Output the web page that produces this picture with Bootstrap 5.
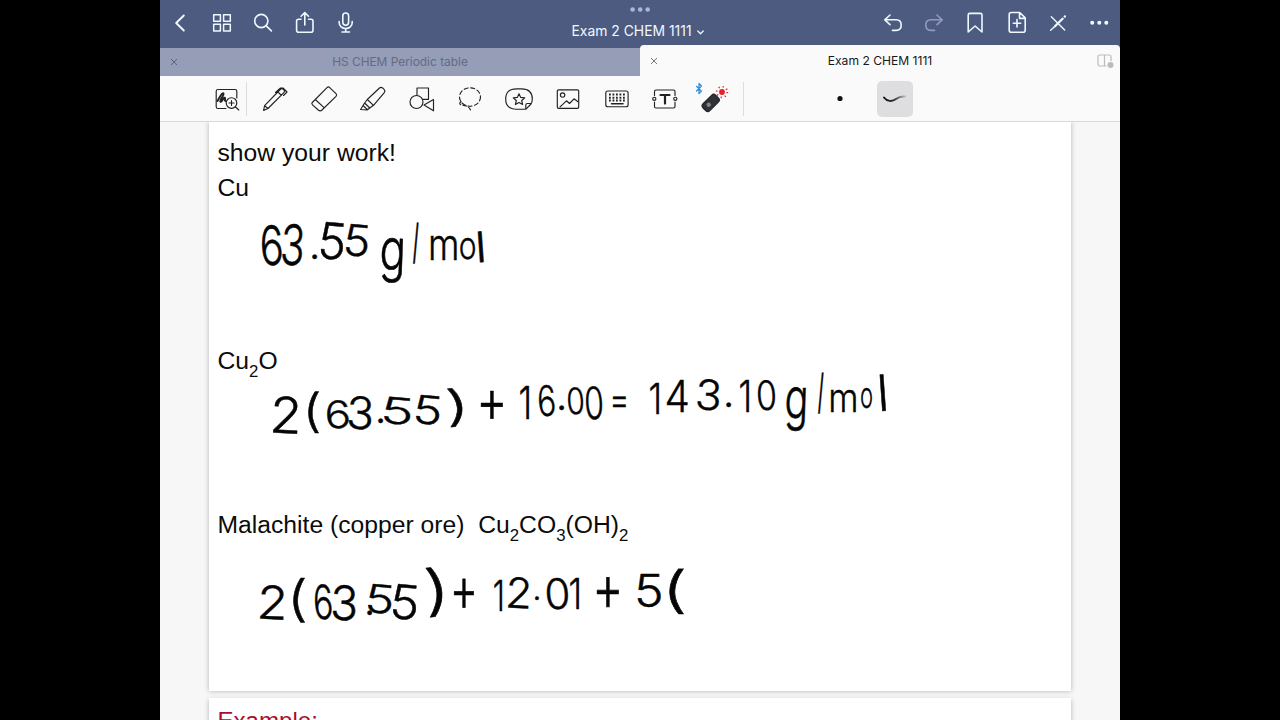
<!DOCTYPE html>
<html lang="en">
<head>
<meta charset="utf-8">
<meta name="viewport" content="width=device-width, initial-scale=1">
<title>Exam 2 CHEM 1111</title>
<link href="https://cdn.jsdelivr.net/npm/bootstrap@5.3.0/dist/css/bootstrap.min.css" rel="stylesheet">
<style>
body{background:#000;height:720px;overflow:hidden;font-family:Inter,"Liberation Sans",sans-serif}
.tablet{width:960px;height:720px;background:#f7f7f8}
.topbar{height:48px;background:#4e5b80;color:#eef8ff}
.cell{width:41.3px;height:46px}
.topbar svg,.tools svg{fill:none;stroke:currentColor;stroke-width:1.6;stroke-linecap:round;stroke-linejoin:round;overflow:visible}
.doc-title{font-size:13.9px;line-height:18px;padding:22px 0 0 37.3px}
.grab{top:7px;left:470px}
.tabs{height:28px;background:#4e5b80}
.tab-off{width:480px;background:#959db7;color:#646b83;font-size:11.9px}
.tab-on{width:480px;height:31px;margin-top:-3px;padding-top:2px;background:#fafafa;color:#17181b;font-size:12.1px;border-radius:4px 4px 0 0;z-index:2}
.close-x{left:9px;top:50%;transform:translateY(-50%)}
.tools{height:46px;background:#fafafa;border-bottom:1px solid #d9d9dc;color:#222}
.tools svg{stroke-width:1.15}
.tool{width:48.75px;height:46px;padding-top:1px}
.rule{width:1px;height:34px;background:#dedee1}
.nib{width:36px;height:36px;border-radius:5px;background:#dedee1}
.desk{height:598px}
.sheet{width:862px;margin-left:49px;background:#fff;color:#0b0b0b;font:24.7px/30px "Liberation Sans",sans-serif;box-shadow:0 0 5px rgba(0,0,0,.28)}
.sheet-a{height:569px;padding:16px 8.5px}
.sheet-b{height:40px;margin-top:7px;padding:8px 8.5px;color:#a80f2e;font-size:24.1px;box-shadow:0 2px 5px rgba(0,0,0,.28)}
.sheet sub{font-size:16.8px;line-height:0;vertical-align:baseline;position:relative;bottom:-.49em}
.ink{left:0;top:0;pointer-events:none}
.ink text{font-family:Inter,"Liberation Sans",sans-serif;font-weight:300;font-size:50px;fill:#050505;stroke:#050505;stroke-width:.5;stroke-linejoin:round}
</style>
</head>
<body>
<main class="tablet mx-auto overflow-hidden">
<header class="topbar d-flex position-relative">
  <div class="d-flex">
    <span class="cell d-flex align-items-center justify-content-center"><svg width="24" height="24"><path d="M14.800 4.500 7.200 12l7.600 7.500" stroke-width="1.900"/></svg></span>
    <span class="cell d-flex align-items-center justify-content-center"><svg width="24" height="24"><path d="M3.700 3.700h6.700v6.600H3.700zM13.600 3.700h6.700v6.600h-6.700zM3.700 13.300h6.700V20H3.700zM13.600 13.300h6.700V20h-6.700z" stroke-width="1.500"/></svg></span>
    <span class="cell d-flex align-items-center justify-content-center"><svg width="24" height="24"><circle cx="10.300" cy="10" r="6.600"/><path d="m15.200 14.900 5.200 5"/></svg></span>
    <span class="cell d-flex align-items-center justify-content-center"><svg width="24" height="24"><path d="M8 8.300H5.600q-2 0-2 2v8.900q0 2 2 2h12.400q2 0 2-2v-8.900q0-2-2-2H15.600M11.800 14V1.800M8.100 5.300l3.700-3.700 3.700 3.700"/></svg></span>
    <span class="cell d-flex align-items-center justify-content-center"><svg width="24" height="24"><rect x="8.800" y="2" width="5.800" height="12.200" rx="2.900"/><path d="M5.200 10.500v1.200a6.500 5.800 0 0 0 13 0v-1.200M11.700 17.600v3.200M8 21h7.500"/></svg></span>
  </div>
  <div class="flex-grow-1 text-center doc-title">Exam 2 CHEM 1111 <svg width="7" height="7" style="margin-left:2px"><path d="m.8 2 2.700 2.700L6.200 2" stroke-width="1.300"/></svg></div>
  <div class="d-flex">
    <span class="cell d-flex align-items-center justify-content-center"><svg width="24" height="24"><path d="M9 4 3.800 8.800 9 13.600M4 8.800h11.200q5 0 5 5.300t-5 5.300H11.500"/></svg></span>
    <span class="cell d-flex align-items-center justify-content-center" style="color:#919bbd"><svg width="24" height="24"><path d="m15 4 5.200 4.800-5.200 4.800M20 8.800H8.800q-5 0-5 5.300t5 5.300h3.700"/></svg></span>
    <span class="cell d-flex align-items-center justify-content-center"><svg width="24" height="24"><path d="M5.200 4q0-1.600 1.600-1.600h10.600q1.600 0 1.600 1.600v17l-6.900-6-6.900 6z"/></svg></span>
    <span class="cell d-flex align-items-center justify-content-center"><svg width="24" height="24"><path d="M6.200 1.500h8.500l5.500 5.400v12.300q0 2-2 2h-12q-2 0-2-2V3.500q0-2 2-2zM14.500 2v5.400H20M8.300 12.300h7.400M12 8.600V16"/></svg></span>
    <span class="cell d-flex align-items-center justify-content-center"><svg width="24" height="24"><path d="m5.300 5.700 13.400 13.200M4.600 19.300 9 15.200" stroke-width="1.400"/><path d="m9 15.200 7.600-7.500" stroke-width="2.300"/><path d="m18.700 5.600.2-.2" stroke-width="2.300"/></svg></span>
    <span class="cell d-flex align-items-center justify-content-center"><svg width="24" height="24"><g fill="currentColor" stroke="none"><circle cx="5.200" cy="11.800" r="2"/><circle cx="12.300" cy="11.800" r="2"/><circle cx="19.300" cy="11.800" r="2"/></g></svg></span>
  </div>
  <svg class="grab position-absolute" width="21" height="5"><g fill="#a9b5da" stroke="none"><circle cx="2.600" cy="2.500" r="2.300"/><circle cx="10.200" cy="2.500" r="2.300"/><circle cx="17.700" cy="2.500" r="2.300"/></g></svg>
</header>
<nav class="tabs d-flex">
  <div class="tab-off position-relative d-flex align-items-center justify-content-center"><svg class="close-x position-absolute" width="10" height="10" stroke="#5c6480"><path d="m2 2 6 6M8 2 2 8"/></svg>HS CHEM Periodic table</div>
  <div class="tab-on position-relative d-flex align-items-center justify-content-center"><svg class="close-x position-absolute" width="10" height="10" stroke="#777"><path d="m2 2 6 6M8 2 2 8"/></svg>Exam 2 CHEM 1111
    <svg class="position-absolute" style="right:6px;top:8px" width="18" height="16" fill="none" stroke="#bcbcc0" stroke-width="1.200"><path d="M10.500 13H3.500q-1.500 0-1.500-1.500v-8Q2 2 3.500 2h10Q15 2 15 3.500V8M8.500 2v11"/><circle cx="14.500" cy="12" r="3" fill="#bcbcc0" stroke="none"/></svg>
  </div>
</nav>
<section class="tools d-flex align-items-center">
  <div class="d-flex justify-content-end" style="width:80px;padding-top:1px"><svg width="26" height="26"><path d="M12 22.500H4q-1.800 0-1.800-1.800V5.300q0-1.800 1.800-1.800h17q1.800 0 1.800 1.800V12"/><path d="M3.500 15c2-4 5-9 6-7.500S5 15 6.500 15.800 9 12 10.500 11.700 10 15 11.500 15" stroke-width="1.900"/><circle cx="17.500" cy="17" r="5.300"/><path d="m21.500 21 3.300 3M15 17h5M17.500 14.500v5"/></svg></div>
  <div class="rule me-1" style="margin-left:6px"></div>
  <div class="d-flex">
    <span class="tool d-flex align-items-center justify-content-center"><svg width="28" height="28"><path d="m2.600 25.500 1-4.800L19.200 4.500q1.700-1.600 3.400 0t0 3.300L7 23.500zM17 7l3.300 3.300M3.600 20.700 7 23.500M14.500 7.500 19.500 3h2.500l4 4-3.500 3.500"/></svg></span>
    <span class="tool d-flex align-items-center justify-content-center"><svg width="28" height="28"><path d="M2.300 17.500 17 2.600q1.400-1.300 2.700 0l6.300 6.100q1.300 1.300 0 2.700L12 25q-1.700 1.500-3.500.2l-6-5.300q-1.300-1.200-.2-2.400zM5.300 14.500l9 8.300"/></svg></span>
    <span class="tool d-flex align-items-center justify-content-center"><svg width="28" height="28"><path d="M8.300 14.500 20.500 3q1.500-1.400 3.500.3l1.300 1.300q1.300 1.500 0 3L14.500 20.300zM8.300 14.500l6.200 5.800-3.700 2.700-5.200-5zM5.600 18l-4 6.500 6.500.5 2.700-2M4 20.500l4.300 4"/></svg></span>
    <span class="tool d-flex align-items-center justify-content-center"><svg width="28" height="28"><path d="M9 10V3h11.500v11.300h-6M25.500 14.500v11.300L16 20z"/><circle cx="8.500" cy="17" r="6.500"/></svg></span>
    <span class="tool d-flex align-items-center justify-content-center"><svg width="28" height="28"><ellipse cx="14" cy="12" rx="10.500" ry="9.200" stroke-dasharray="4 2.700"/><path d="M5 16.500q-2.500 2.500 0 3.300 3 .5 5.500 1.200 3 1 4 4" stroke-dasharray="4 2"/></svg></span>
    <span class="tool d-flex align-items-center justify-content-center"><svg width="28" height="28"><path d="M21 24.200h-9.500Q.7 24.200.7 14T11.500 3.800h5Q27.300 3.800 27.300 14q0 3-1.300 5zM20.800 24v-4q0-1.500 1.500-1.500H26"/><path d="m14 8.800 1.700 3.600 4 .4-3 2.700.9 4-3.600-2-3.600 2 .9-4-3-2.700 4-.4z"/></svg></span>
    <span class="tool d-flex align-items-center justify-content-center"><svg width="28" height="28"><rect x="3.300" y="4.800" width="21.400" height="18.500" rx="1.300"/><circle cx="8.600" cy="10" r="2.200"/><path d="m6 21.800 6.500-6 3 2.700 4.500-4.700 4 3"/></svg></span>
    <span class="tool d-flex align-items-center justify-content-center"><svg width="28" height="28"><rect x="2.800" y="6" width="22.300" height="15.700" rx="2"/><path d="M6 9.500h17M6 12.700h17M6 15.600h17" stroke-width="2" stroke-dasharray="1.800 1.700" stroke-linecap="butt"/><path d="M8.500 18.700h11.500" stroke-width="1.500"/></svg></span>
    <span class="tool d-flex align-items-center justify-content-center"><svg width="28" height="28"><path d="M3.500 10.500V6.500q0-1.500 1.500-1.500h17.500Q24 5 24 6.500v4M3.500 17v4.500Q3.500 23 5 23h17.500q1.500 0 1.500-1.500V17"/><circle cx="3.300" cy="13.800" r="1.600"/><circle cx="24.300" cy="13.800" r="1.600"/><path d="M9.500 10h9M14 10v8.600" stroke-width="2.200"/></svg></span>
    <span class="tool d-flex align-items-center justify-content-center"><svg width="36" height="36" viewBox="-4 -5 36 36"><path d="m-3.500 .3 5 4.800L-1 7.500v-10L1.500 0-3.500 5" stroke="#268bdc" stroke-width="1.200"/><g transform="rotate(-45 10.500 17)"><rect x="1.700" y="12.300" width="18" height="9.600" rx="3" fill="#303238" stroke="#222"/><circle cx="8" cy="17" r="2.200" fill="#81848a" stroke="none"/></g><circle cx="22" cy="6" r="2.900" fill="#e5202d" stroke="none"/><circle cx="22" cy="6" r="5.300" stroke="#e5202d" stroke-width="1.700" stroke-linecap="butt" stroke-dasharray="1.200 2.960"/></svg></span>
  </div>
  <div class="rule" style="margin-left:4px"></div>
  <svg style="margin-left:92.500px" width="8" height="8"><circle cx="4" cy="3.500" r="2.600" fill="#111" stroke="none"/></svg>
  <span class="nib d-flex align-items-center justify-content-center" style="margin-left:32.500px"><svg width="26" height="12"><defs><linearGradient id="fade"><stop stop-color="#111"/><stop offset=".5" stop-color="#333"/><stop offset="1" stop-color="#bbb"/></linearGradient></defs><path d="M2 4.500C5 8.500 10 9 14 6q4-3 9-2.500" stroke="url(#fade)" stroke-width="1.900"/></svg></span>
</section>
<section class="desk position-relative overflow-hidden">
  <article class="sheet sheet-a position-relative">
    <div>show your work!</div>
    <div style="margin-top:5px">Cu</div>
    <div style="margin-top:143px;height:30px">Cu<sub>2</sub>O</div>
    <div style="margin-top:134px;height:30px">Malachite (copper ore)&nbsp; Cu<sub>2</sub>CO<sub>3</sub>(OH)<sub>2</sub></div>
    <svg class="ink position-absolute" width="862" height="568" viewBox="209 122 862 568"></svg>
  </article>
  <article class="sheet sheet-b">Example:</article>
</section>
</main>
<script src="https://cdn.jsdelivr.net/npm/bootstrap@5.3.0/dist/js/bootstrap.bundle.min.js"></script>
<script>
// Pen entries: [character, left, top, right, bottom, slant in degrees]
const entries = [
  [["6",262,225,281,265,-3],["3",283,224,303,265,4],[".",312,254,317,259],["5",321,222,344,259,5],["5",346,224,368,256,5],
   ["g",381,239,402,283,2],["/",412,223,420,264,-3],["m",431,236,457,260],["o",460,239,475,260],["l",479,231,483,262,-4]],
  [["2",274,396,298,433,3],["(",308,391,319,433],["6",327,400,348,428,-4],["3",349,396,372,429,3],[".",378,418,383,423],["5",384,397,411,424,5],["5",416,395,440,424,5],[")",448,388,462,427,-5],
   ["+",481,390,503,418],
   ["1",520,386,529,419],["6",539,385,554,416,-4],[".",559,405,564,410],["0",568,387,583,414,-3],["0",586,386,602,419,-3],
   ["=",613,396,626,407],
   ["1",650,383,659,414],["4",667,380,688,412],["3",698,379,720,410,4],[".",726,402,731,407],["1",740,380,749,412],["0",758,380,775,410,-3],
   ["g",786,388,805,431,2],["/",817,373,825,414,-3],["m",831,390,856,412],["o",861,389,872,409],["l",881,374,885,411,-4]],
  [["2",261,585,284,619,3],["(",293,578,305,623],["6",315,584,331,619,-4],["3",333,585,356,620,2],[".",367,610,372,615],["5",368,584,392,613,5],["5",393,584,417,619,5],[")",427,567,442,617,-5],
   ["+",454,578,474,607],
   ["1",494,580,502,611],["2",509,577,529,608,3],[".",535,596,539,600],["0",547,578,568,609,-4],["1",570,578,579,609],
   ["+",597,577,619,607],
   ["5",637,574,661,607],["(",669,568,684,614]]
];
const NS = "http://www.w3.org/2000/svg", ink = document.querySelector(".ink");
const pen = document.createElement("canvas").getContext("2d");
pen.font = '300 50px Inter, "Liberation Sans", sans-serif';
for (const line of entries) {
  const group = ink.appendChild(document.createElementNS(NS, "g"));
  for (const [ch, l, t, r, b, slant = 0] of line) {
    const m = pen.measureText(ch);
    const sx = (r - l) / (m.actualBoundingBoxLeft + m.actualBoundingBoxRight);
    const sy = (b - t) / (m.actualBoundingBoxAscent + m.actualBoundingBoxDescent);
    const x = l + m.actualBoundingBoxLeft * sx, y = t + m.actualBoundingBoxAscent * sy;
    const el = group.appendChild(document.createElementNS(NS, "text"));
    el.textContent = ch;
    el.setAttribute("transform", `rotate(${slant} ${(l + r) / 2} ${(t + b) / 2}) translate(${x} ${y}) scale(${sx} ${sy})`);
  }
}
</script>
</body>
</html>
